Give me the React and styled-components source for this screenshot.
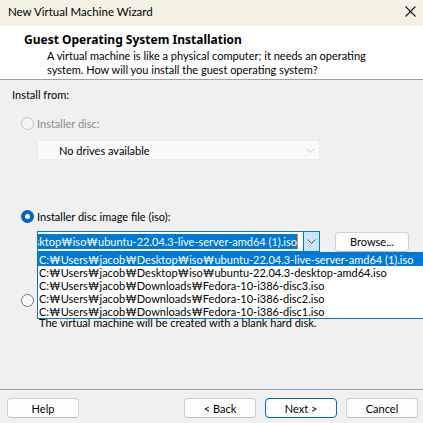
import React from "react";
import styled, { createGlobalStyle } from "styled-components";

const GlobalStyle = createGlobalStyle`
  html, body {
    margin: 0;
    padding: 0;
    background: #f0f0f0;
  }
  body {
    font-family: Lato, "Noto Sans CJK KR", sans-serif;
    font-size: 11px;
    color: #000;
  }
  * { box-sizing: border-box; }
`;

const isoFiles = [
  "C:₩Users₩jacob₩Desktop₩iso₩ubuntu-22.04.3-live-server-amd64 (1).iso",
  "C:₩Users₩jacob₩Desktop₩iso₩ubuntu-22.04.3-desktop-amd64.iso",
  "C:₩Users₩jacob₩Downloads₩Fedora-10-i386-disc3.iso",
  "C:₩Users₩jacob₩Downloads₩Fedora-10-i386-disc2.iso",
  "C:₩Users₩jacob₩Downloads₩Fedora-10-i386-disc1.iso",
];

const Chevron = ({ color }) => (
  <svg width="9" height="5" viewBox="0 0 9 5">
    <path d="M0.5 0.5 L4.5 4.5 L8.5 0.5" fill="none" stroke={color} strokeWidth="1" />
  </svg>
);

const App = () => {
  return (
    <>
      <GlobalStyle />
      <Window>
        <TitleBar>
          <TitleText>New Virtual Machine Wizard</TitleText>
          <svg width="11" height="11" viewBox="0 0 11 11">
            <path d="M0.5 0.5 L10.5 10.5 M10.5 0.5 L0.5 10.5" stroke="#1a1a1a" strokeWidth="1.1" />
          </svg>
        </TitleBar>

        <Header>
          <HeaderTitle>Guest Operating System Installation</HeaderTitle>
          <HeaderText>
            A virtual machine is like a physical computer; it needs an operating
            <br />
            system. How will you install the guest operating system?
          </HeaderText>
        </Header>
        <Divider />

        <Content>
          <Label>Install from:</Label>

          <RadioRow $top={14} $disabled>
            <Radio $disabled />
            <span>Installer disc:</span>
          </RadioRow>
          <DisabledCombo>
            <span>No drives available</span>
            <Chevron color="#c4c4c4" />
          </DisabledCombo>

          <RadioRow $top={49}>
            <Radio $checked />
            <span>Installer disc image file (iso):</span>
          </RadioRow>
          <ComboLine>
            <ComboWrap>
              <EditCombo>
                <EditField>
                  <Selected>{isoFiles[0]}</Selected>
                  <Caret />
                </EditField>
                <DropButton>
                  <Chevron color="#505050" />
                </DropButton>
              </EditCombo>
              <DropList>
                {isoFiles.map((f, i) => (
                  <DropItem key={f} $active={i === 0}>
                    {f}
                  </DropItem>
                ))}
              </DropList>
            </ComboWrap>
            <Button $width={74}>Browse...</Button>
          </ComboLine>

          <RadioRow $top={41}>
            <Radio />
            <span>I will install the operating system later.</span>
          </RadioRow>
          <Note>The virtual machine will be created with a blank hard disk.</Note>
        </Content>

        <Divider />
        <Footer>
          <Button $width={72}>Help</Button>
          <Spacer />
          <Button $width={72}>&lt; Back</Button>
          <Button $width={72} $primary>
            Next &gt;
          </Button>
          <Button $width={72}>Cancel</Button>
        </Footer>
      </Window>
    </>
  );
};

export default App;

const Window = styled.div`
  width: 423px;
  height: 423px;
  display: flex;
  flex-direction: column;
  overflow: hidden;
  background: #f0f0f0;
`;

const TitleBar = styled.div`
  height: 26px;
  flex: none;
  display: flex;
  align-items: center;
  justify-content: space-between;
  padding: 0 7px 4px 8px;
  background: #f2f1e4;
`;

const TitleText = styled.div`
  font-size: 11.5px;
  color: #000;
`;

const Header = styled.div`
  height: 53px;
  flex: none;
  background: #fff;
  padding: 7px 0 0 24px;
`;

const HeaderTitle = styled.div`
  font-family: "Noto Sans", sans-serif;
  font-weight: 700;
  font-size: 12px;
  line-height: 14px;
`;

const HeaderText = styled.div`
  margin: 2px 0 0 23px;
  line-height: 14px;
`;

const Divider = styled.div`
  height: 1px;
  flex: none;
  background: #a0a0a0;
`;

const Content = styled.div`
  flex: 1;
  padding: 8px 12px 0 12px;
`;

const Label = styled.div`
  line-height: 14px;
`;

const RadioRow = styled.div`
  display: flex;
  align-items: center;
  gap: 3px;
  height: 14px;
  margin: ${(p) => p.$top}px 0 0 9px;
  color: ${(p) => (p.$disabled ? "#8c8c8c" : "#000")};
`;

const Radio = styled.span`
  width: 13px;
  height: 13px;
  flex: none;
  border-radius: 50%;
  background: ${(p) => (p.$checked ? "#fff" : p.$disabled ? "#f5f5f5" : "#f7f7f7")};
  border: ${(p) =>
    p.$checked ? "4px solid #0064b8" : p.$disabled ? "1px solid #c2c2c2" : "1px solid #7a7a7a"};
`;

const DisabledCombo = styled.div`
  margin: 10px 0 0 25px;
  width: 283px;
  height: 20px;
  display: flex;
  align-items: center;
  justify-content: space-between;
  padding: 0 4px 0 21px;
  background: #fafafa;
  border: 1px solid #ececec;
`;

const ComboLine = styled.div`
  display: flex;
  align-items: center;
  gap: 15px;
  margin: 8px 0 0 25px;
`;

const ComboWrap = styled.div`
  position: relative;
  width: 283px;
`;

const EditCombo = styled.div`
  height: 21px;
  display: flex;
  border: 1px solid #0078d7;
  background: #fff;
`;

const EditField = styled.div`
  flex: 1;
  display: flex;
  align-items: center;
  justify-content: flex-end;
  overflow: hidden;
  padding: 0 5px 0 1px;
`;

const Selected = styled.span`
  flex: none;
  white-space: nowrap;
  background: #0078d7;
  color: #fff;
  line-height: 15px;
`;

const Caret = styled.span`
  flex: none;
  width: 1px;
  height: 15px;
  background: #e08a2c;
`;

const DropButton = styled.div`
  width: 16px;
  display: flex;
  align-items: center;
  justify-content: center;
  background: #cce4f7;
  border-left: 1px solid #0078d7;
`;

const DropList = styled.div`
  position: absolute;
  left: 0;
  top: 21px;
  width: 400px;
  background: #fff;
  border: 1px solid #0078d7;
  z-index: 2;
`;

const DropItem = styled.div`
  height: 13px;
  line-height: 13px;
  padding-left: 1px;
  white-space: nowrap;
  background: ${(p) => (p.$active ? "#0078d7" : "#fff")};
  color: ${(p) => (p.$active ? "#fff" : "#000")};
`;

const Note = styled.div`
  margin: 9px 0 0 27px;
  line-height: 14px;
`;

const Footer = styled.div`
  height: 33px;
  flex: none;
  display: flex;
  align-items: flex-start;
  gap: 9px;
  padding: 8px 5px 0 7px;
`;

const Spacer = styled.div`
  flex: 1;
`;

const Button = styled.button`
  width: ${(p) => p.$width}px;
  height: 20px;
  flex: none;
  padding: 0;
  font-family: inherit;
  font-size: 11px;
  color: #000;
  background: #fdfdfd;
  border: 1px solid ${(p) => (p.$primary ? "#0067c0" : "#d0d0d0")};
  border-bottom-color: ${(p) => (p.$primary ? "#0067c0" : "#bcbcbc")};
  border-radius: 4px;
  box-shadow: ${(p) => (p.$primary ? "inset 0 0 0 1px #fdfdfd" : "none")};
`;
